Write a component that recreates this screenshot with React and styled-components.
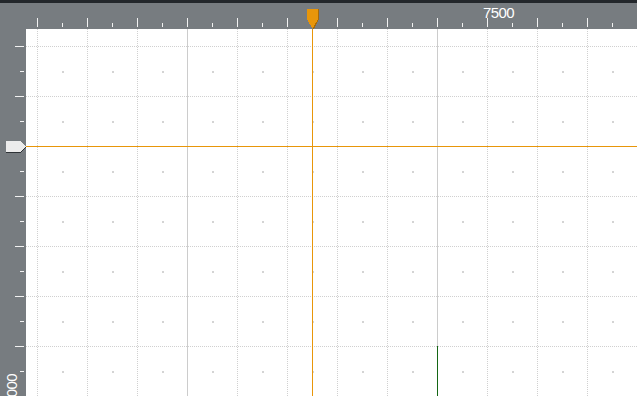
import React from "react";
import styled, { createGlobalStyle } from "styled-components";

const GlobalStyle = createGlobalStyle`
  html, body {
    margin: 0;
    padding: 0;
    background: #ffffff;
    overflow: hidden;
  }
`;

const RULER = "#777c80";
const GUIDE = "#e8960a";
const GRID = "#d0d0d0";

const Frame = styled.div`
  width: 637px;
  height: 396px;
  display: flex;
  flex-direction: column;
  overflow: hidden;
  font-family: "Liberation Sans", Arial, sans-serif;
`;

const TopStrip = styled.div`
  height: 3px;
  background: #23272b;
  flex: none;
`;

const RulerRow = styled.div`
  display: flex;
  height: 26px;
  flex: none;
`;

const Corner = styled.div`
  width: 26px;
  background: ${RULER};
  flex: none;
`;

const HRuler = styled.div`
  position: relative;
  flex: 1;
  background: ${RULER};
  overflow: hidden;
`;

const Body = styled.div`
  display: flex;
  flex: 1;
  min-height: 0;
`;

const VRuler = styled.div`
  position: relative;
  width: 26px;
  flex: none;
  background: ${RULER};
  overflow: hidden;
`;

const Canvas = styled.div`
  position: relative;
  flex: 1;
  background: #ffffff;
  overflow: hidden;
`;

const Layer = styled.svg`
  position: absolute;
  left: 0;
  top: 0;
  display: block;
`;

const HLabel = styled.span`
  position: absolute;
  left: ${(p) => p.x}px;
  top: 1px;
  color: #ffffff;
  font-size: 15px;
  letter-spacing: -0.6px;
  line-height: 18px;
`;

const VLabel = styled.span`
  position: absolute;
  left: 3px;
  top: ${(p) => p.y}px;
  color: #ffffff;
  font-size: 15px;
  letter-spacing: -0.6px;
  line-height: 18px;
  writing-mode: vertical-rl;
  transform: rotate(180deg);
`;

const range = (start, end, step) => {
  const out = [];
  for (let v = start; v < end; v += step) out.push(v);
  return out;
};

function TopTicks() {
  return (
    <Layer width="611" height="26" shapeRendering="crispEdges">
      {range(11, 611, 50).map((x) => (
        <rect key={"M" + x} x={x} y={15} width={1} height={9} fill="#f2f2f2" />
      ))}
      {range(36, 611, 50).map((x) => (
        <rect key={"m" + x} x={x} y={20} width={1} height={4} fill="#f2f2f2" />
      ))}
      <g transform="translate(281 6)">
        <polygon points="1,0 12,0 12,10 7,20 6,20 1,10" fill="#a86a06" />
        <polygon points="0,0 11,0 11,10 6,19 5,19 0,10" fill={GUIDE} />
      </g>
    </Layer>
  );
}

function LeftTicks() {
  return (
    <Layer width="26" height="367" shapeRendering="crispEdges">
      {range(17, 367, 50).map((y) => (
        <rect key={"M" + y} x={15} y={y} width={9} height={1} fill="#f2f2f2" />
      ))}
      {range(42, 367, 50).map((y) => (
        <rect key={"m" + y} x={20} y={y} width={4} height={1} fill="#f2f2f2" />
      ))}
      <g transform="translate(6 112)">
        <polygon points="0,1 14,1 20,6 14,12 0,12" fill="#2e3236" />
        <polygon points="0,0 14,0 20,5 14,11 0,11" fill="#ececec" />
      </g>
    </Layer>
  );
}

function Grid({ width, height }) {
  const xs = range(11, width, 50);
  const ys = range(17, height, 50);
  return (
    <Layer width={width} height={height} shapeRendering="crispEdges">
      {xs.map((x) =>
        (x - 11) % 250 === 150 ? (
          <line key={"v" + x} x1={x + 0.5} y1={0} x2={x + 0.5} y2={height} stroke="#cccccc" />
        ) : (
          <line
            key={"v" + x}
            x1={x + 0.5}
            y1={0}
            x2={x + 0.5}
            y2={height}
            stroke={GRID}
            strokeDasharray="1 1"
          />
        )
      )}
      {ys.map((y) => (
        <line
          key={"h" + y}
          x1={0}
          y1={y + 0.5}
          x2={width}
          y2={y + 0.5}
          stroke={GRID}
          strokeDasharray="1 1"
        />
      ))}
      {range(36, width, 50).map((x) =>
        range(42, height, 50).map((y) => (
          <rect key={x + "-" + y} x={x} y={y} width={2} height={2} fill="#d4d4d4" />
        ))
      )}
      <rect x={411} y={317} width={1} height={height - 317} fill="#146614" />
      <rect x={286} y={0} width={1} height={height} fill={GUIDE} />
      <rect x={0} y={117} width={width} height={1} fill={GUIDE} />
    </Layer>
  );
}

export default function App() {
  return (
    <Frame>
      <GlobalStyle />
      <TopStrip />
      <RulerRow>
        <Corner />
        <HRuler>
          <TopTicks />
          <HLabel x={457}>7500</HLabel>
        </HRuler>
      </RulerRow>
      <Body>
        <VRuler>
          <LeftTicks />
          <VLabel y={345}>7000</VLabel>
        </VRuler>
        <Canvas>
          <Grid width={611} height={367} />
        </Canvas>
      </Body>
    </Frame>
  );
}
